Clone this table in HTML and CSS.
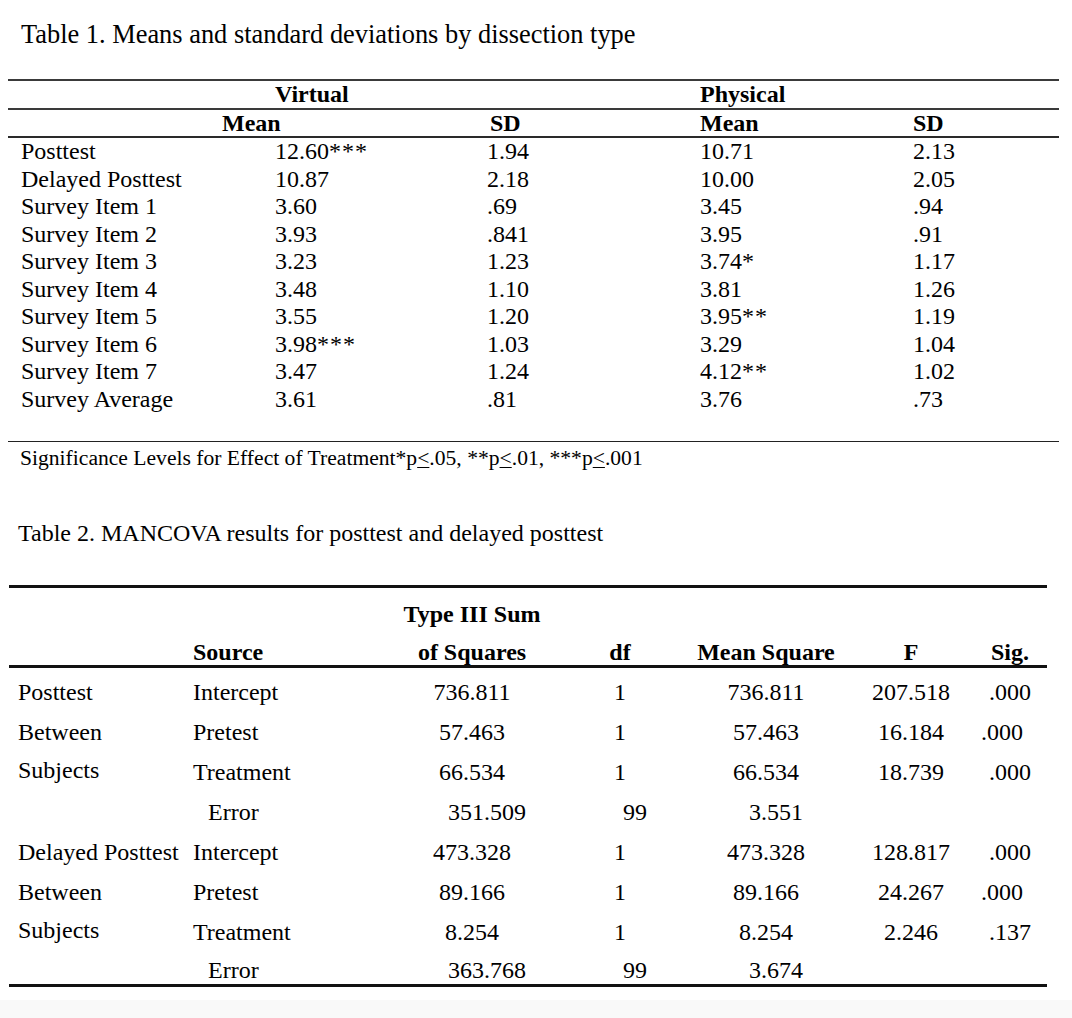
FILE: index.html
```html
<!DOCTYPE html>
<html>
<head>
<meta charset="utf-8">
<link rel="stylesheet" href="styles.css">
</head>
<body>
<div class="page">
  <div class="title t1">Table 1. Means and standard deviations by dissection type</div>

  <div class="tbl1">
    <div class="r1 hrow hr1">
      <div></div><div class="b">Virtual</div><div></div><div class="b">Physical</div><div></div>
    </div>
    <div class="r1 hrow hr2">
      <div></div><div class="b vmean">Mean</div><div class="b sd">SD</div><div class="b">Mean</div><div class="b">SD</div>
    </div>
    <div class="body1">
      <div class="r1 drow"><div class="lab">Posttest</div><div>12.60<span class="ast">***</span></div><div>1.94</div><div>10.71</div><div>2.13</div></div>
      <div class="r1 drow"><div class="lab">Delayed Posttest</div><div>10.87</div><div>2.18</div><div>10.00</div><div>2.05</div></div>
      <div class="r1 drow"><div class="lab">Survey Item 1</div><div>3.60</div><div>.69</div><div>3.45</div><div>.94</div></div>
      <div class="r1 drow"><div class="lab">Survey Item 2</div><div>3.93</div><div>.841</div><div>3.95</div><div>.91</div></div>
      <div class="r1 drow"><div class="lab">Survey Item 3</div><div>3.23</div><div>1.23</div><div>3.74<span class="ast">*</span></div><div>1.17</div></div>
      <div class="r1 drow"><div class="lab">Survey Item 4</div><div>3.48</div><div>1.10</div><div>3.81</div><div>1.26</div></div>
      <div class="r1 drow"><div class="lab">Survey Item 5</div><div>3.55</div><div>1.20</div><div>3.95<span class="ast">**</span></div><div>1.19</div></div>
      <div class="r1 drow"><div class="lab">Survey Item 6</div><div>3.98<span class="ast">***</span></div><div>1.03</div><div>3.29</div><div>1.04</div></div>
      <div class="r1 drow"><div class="lab">Survey Item 7</div><div>3.47</div><div>1.24</div><div>4.12<span class="ast">**</span></div><div>1.02</div></div>
      <div class="r1 drow"><div class="lab">Survey Average</div><div>3.61</div><div>.81</div><div>3.76</div><div>.73</div></div>
    </div>
  </div>
  <div class="note">Significance Levels for Effect of Treatment*p<u>&lt;</u>.05, **p<u>&lt;</u>.01, ***p<u>&lt;</u>.001</div>

  <div class="title t2">Table 2. MANCOVA results for posttest and delayed posttest</div>

  <div class="tbl2">
    <div class="head2">
      <div class="r2 h2a"><div></div><div></div><div class="c b">Type III Sum</div><div></div><div></div><div></div><div></div></div>
      <div class="r2 h2b"><div></div><div class="b src">Source</div><div class="c b">of Squares</div><div class="c b">df</div><div class="c b">Mean Square</div><div class="c b">F</div><div class="c b sig">Sig.</div></div>
    </div>
    <div class="body2">
      <div class="r2 d2"><div class="lab2">Posttest</div><div class="src">Intercept</div><div class="c">736.811</div><div class="c">1</div><div class="c">736.811</div><div class="c">207.518</div><div class="c sig">.000</div></div>
      <div class="r2 d2"><div class="lab2">Between</div><div class="src">Pretest</div><div class="c">57.463</div><div class="c">1</div><div class="c">57.463</div><div class="c">16.184</div><div class="c sig sigl">.000</div></div>
      <div class="r2 d2"><div class="lab2 up">Subjects</div><div class="src">Treatment</div><div class="c">66.534</div><div class="c">1</div><div class="c">66.534</div><div class="c">18.739</div><div class="c sig">.000</div></div>
      <div class="r2 d2 err"><div></div><div class="src">Error</div><div class="c">351.509</div><div class="c">99</div><div class="c">3.551</div><div class="c"></div><div class="c sig"></div></div>
      <div class="r2 d2"><div class="lab2">Delayed Posttest</div><div class="src">Intercept</div><div class="c">473.328</div><div class="c">1</div><div class="c">473.328</div><div class="c">128.817</div><div class="c sig">.000</div></div>
      <div class="r2 d2"><div class="lab2">Between</div><div class="src">Pretest</div><div class="c">89.166</div><div class="c">1</div><div class="c">89.166</div><div class="c">24.267</div><div class="c sig sigl">.000</div></div>
      <div class="r2 d2"><div class="lab2 up">Subjects</div><div class="src">Treatment</div><div class="c">8.254</div><div class="c">1</div><div class="c">8.254</div><div class="c">2.246</div><div class="c sig">.137</div></div>
      <div class="r2 d2 err last"><div></div><div class="src">Error</div><div class="c">363.768</div><div class="c">99</div><div class="c">3.674</div><div class="c"></div><div class="c sig"></div></div>
    </div>
  </div>
</div>
<div class="band"></div>
</body>
</html>
```

FILE: styles.css
```css
html, body {
  margin: 0;
  padding: 0;
  background: #ffffff;
}
body {
  font-family: "Liberation Serif", "Times New Roman", serif;
  color: #000;
  width: 1072px;
}
.page {
  height: 1000px;
  overflow: hidden;
}
.band {
  height: 18px;
  background: #f9f9f9;
}
.b { font-weight: bold; }

.title {
  font-size: 24px;
  line-height: 28px;
  white-space: nowrap;
}
.t1 {
  font-size: 26.4px;
  padding-top: 20px;
  padding-left: 21px;
}

/* ---------- Table 1 ---------- */
.tbl1 {
  margin-top: 31px;
  margin-left: 8px;
  width: 1051px;
  border-top: 2px solid #3a3a3a;
  border-bottom: 1px solid #222;
  font-size: 24px;
}
.r1 {
  display: grid;
  grid-template-columns: 267px 212px 213px 213px 1fr;
  white-space: nowrap;
}
.hrow { line-height: 26px; }
.hr1 {
  height: 27px;
  border-bottom: 2px solid #3a3a3a;
}
.hr2 {
  height: 26px;
  border-bottom: 2px solid #2a2a2a;
}
.vmean { margin-left: -53px; }
.sd { padding-left: 3px; }
.body1 {
  padding-bottom: 28px;
}
.drow {
  height: 27.5px;
  line-height: 27.5px;
}
.lab { padding-left: 13px; }
.ast { letter-spacing: 1px; }

.note {
  font-size: 21.6px;
  line-height: 24px;
  margin-top: 4px;
  padding-left: 20px;
  white-space: nowrap;
}
.note u { text-decoration-thickness: 1px; text-underline-offset: 2px; }

/* ---------- Table 2 ---------- */
.t2 {
  margin-top: 49px;
  padding-left: 18px;
}
.tbl2 {
  margin-top: 38px;
  margin-left: 9px;
  width: 1038px;
  border-top: 3px solid #111;
  border-bottom: 3px solid #111;
  font-size: 24px;
}
.r2 {
  display: grid;
  grid-template-columns: 176px 195px 184px 112px 180px 110px 1fr;
  white-space: nowrap;
}
.head2 {
  padding-top: 13px;
  border-bottom: 3px solid #111;
}
.h2a, .h2b {
  line-height: 26px;
  height: 26px;
}
.h2b { margin-top: 12px; }
.c { text-align: center; }
.src { padding-left: 8px; }
.sig { padding-left: 7px; }
.sigl { padding-left: 0; padding-right: 9px; }
.lab2 { padding-left: 9px; }
.up { line-height: 36px; }
.body2 { padding-top: 4px; }
.d2 {
  height: 40px;
  line-height: 40px;
}
.d2.last {
  height: 32px;
  line-height: 36px;
}
.err .src { padding-left: 23px; }
.err .c { padding-left: 30px; }
.err .c:nth-child(5) { padding-left: 20px; }
```
